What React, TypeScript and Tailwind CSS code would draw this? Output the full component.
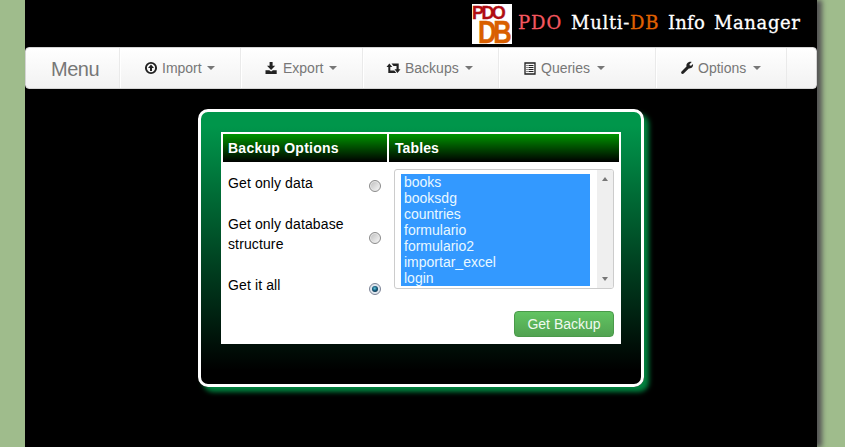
import React from "react";

const sans = "font-['Liberation_Sans',Arial,sans-serif]";

const UploadIcon = () => (
  <svg className="block h-[14px] w-[14px]" viewBox="0 0 14 14">
    <circle cx="7" cy="7" r="5.1" fill="none" stroke="#222" strokeWidth="1.9" />
    <path d="M7 3.4 10 7H8v3H6V7H4z" fill="#222" />
  </svg>
);
const DownloadIcon = () => (
  <svg className="block h-[14px] w-[14px]" viewBox="0 0 14 14">
    <path d="M5.600 1h3v3.800h2.600L7.100 9 3 4.800h2.600zM1.500 9.300h3.800l1.800 1.300 1.800-1.300h3.800V13H1.500z" fill="#222" />
  </svg>
);
const RetweetIcon = () => (
  <svg className="block h-[14px] w-[15px]" viewBox="0 0 15 14">
    <path d="M3.300 2.500 6.300 6h-2v3.500h4l2 2.500H2.300V6H.5zM5.500 2.500h7.200V8.300h1.800l-3 3.700L8.500 8.300h2V5H7.500z" fill="#222" />
  </svg>
);
const ListIcon = () => (
  <svg className="block h-[14px] w-[14px]" viewBox="0 0 14 14">
    <path d="M2 2h10v11H2z" fill="none" stroke="#222" strokeWidth="1.300" />
    <path d="M3.500 4.500h1m1 0h5m-7 2h1m1 0h5m-7 2h1m1 0h5m-7 2h1m1 0h5" stroke="#222" />
  </svg>
);
const WrenchIcon = () => (
  <svg className="block h-[14px] w-[14px]" viewBox="0 0 14 14">
    <path d="M11.700 1 9.500 3.200l.3 1.300 1.300.3L13 3c.5 2.800-1.600 4.800-4.200 4.400L3.700 12.600c-1.400 1.300-3.500-.7-2.200-2.200L6.500 5.400C6 2.700 8.500.2 11.700 1z" fill="#222" />
  </svg>
);

type Item = { label: string; icon: React.ReactNode; cls: string; text: string };
const items: Item[] = [
  { label: "Import", icon: <UploadIcon />, cls: "w-[121px] pl-[24px]", text: "ml-[4px] w-[45px]" },
  { label: "Export", icon: <DownloadIcon />, cls: "w-[122px] pl-[23px]", text: "ml-[5px] w-[46px]" },
  { label: "Backups", icon: <RetweetIcon />, cls: "w-[136px] pl-[23px]", text: "ml-[4px] w-[60px]" },
  { label: "Queries", icon: <ListIcon />, cls: "w-[157px] pl-[24px]", text: "ml-[4px] w-[56px]" },
  { label: "Options", icon: <WrenchIcon />, cls: "w-[131px] pl-[24px]", text: "ml-[4px] w-[55px]" },
];

const Radio = ({ on = false }: { on?: boolean }) => (
  <span
    className={`mr-[2px] flex h-3 w-3 items-center justify-center rounded-full border ${
      on ? "border-[#7d8496] bg-[#dfe6ee]" : "border-[#8b8b8b] bg-linear-to-br from-[#bcbcbc] to-[#fafafa] shadow-[inset_0_0_0_1px_#e9e9e9]"
    }`}
  >
    {on && <span className="h-[6px] w-[6px] rounded-full bg-[radial-gradient(circle_at_45%_40%,#62c8dc_0%,#155a7c_45%,#0a2238_90%)]" />}
  </span>
);

const tables = ["books", "booksdg", "countries", "formulario", "formulario2", "importar_excel", "login"];

export default function App() {
  return (
    <div className={`h-[447px] w-[845px] overflow-hidden bg-[#9fbc8c] pl-[25px] text-[14px] ${sans}`}>
      <div className="h-[447px] w-[792px] bg-black shadow-[5px_0_5px_#555]">
        <header className="flex h-[47px] pl-[447px] pt-[4px]">
          <svg className="block h-10 w-10 shrink-0 overflow-visible bg-white" viewBox="0 0 40 40" fontFamily="'Liberation Sans'" fontWeight="bold">
            <text x="0" y="15" fontSize="18" letterSpacing="-2.6" fill="#b00d12" stroke="#b00d12" strokeWidth=".3">PDO</text>
            <text x="7.500" y="39.500" fontSize="32" letterSpacing="-4" transform="scale(.8 1)" fill="#d95f00" stroke="#d95f00" strokeWidth=".4">DB</text>
          </svg>
          <h1 className="ml-[6px] mt-[6px] flex whitespace-nowrap font-['DejaVu_Serif',serif] text-[18px] leading-[26px] text-white [-webkit-text-stroke:0.3px]">
            <span className="w-[53px] tracking-[1px] text-[#f4575f]">PDO</span>
            <span className="w-[97px] tracking-[0.7px]">Multi-<span className="text-[#e26200]">DB</span></span>
            <span className="w-[46px] tracking-[0.2px]">Info</span>
            <span className="tracking-[0.6px]">Manager</span>
          </h1>
        </header>
        <nav className="flex h-[42px] rounded-[4px] border border-[#d4d4d4] bg-linear-to-b from-white to-[#f2f2f2] text-[#777]">
          <span className="w-[93px] pl-[25px] pt-[1px] text-[20px] leading-[40px] tracking-[-0.5px]">Menu</span>
          {items.map((it) => (
            <a key={it.label} className={`flex h-10 items-center border-l border-[#eaeaea] shadow-[inset_1px_0_0_white] ${it.cls}`}>
              {it.icon}
              <span className={it.text}>{it.label}</span>
              <span className="border-x-4 border-t-4 border-x-transparent border-t-[#777]" />
            </a>
          ))}
          <span className="h-10 border-l border-[#eaeaea]" />
        </nav>
        <main className="ml-[173px] mt-[20px] h-[278px] w-[446px] rounded-[10px] border-[3px] border-white bg-linear-to-b/srgb from-[#00964b] from-5% to-black to-95% pl-[20px] pt-[20px] shadow-[5px_5px_5px_#00833f]">
          <section className="h-[212px] w-[400px] bg-white p-[2px] text-black">
            <div className="flex h-7 gap-[2px] font-bold leading-[28px] text-white">
              <div className="w-[164px] bg-linear-to-b/srgb from-[#009400] to-black pl-[5px] tracking-[0.25px]">Backup Options</div>
              <div className="w-[230px] bg-linear-to-b/srgb from-[#009400] to-black pl-[6px] tracking-[0.1px]">Tables</div>
            </div>
            <div className="flex">
              <div className="w-[166px] pl-[5px] pt-[11px] leading-[20px] tracking-[0.12px]">
                <div className="flex h-[41px] justify-between">
                  <span>Get only data</span><span className="mr-[6px] mt-[7px]"><Radio /></span>
                </div>
                <div className="flex h-[61px] justify-between">
                  <span className="w-[125px]">Get only database structure</span><span className="mr-[6px] mt-[18px]"><Radio /></span>
                </div>
                <div className="flex justify-between">
                  <span>Get it all</span><span className="mr-[6px] mt-[8px]"><Radio on /></span>
                </div>
              </div>
              <div className="w-[230px] pl-[5px] pt-[7px]">
                <div className="flex h-[120px] w-[220px] justify-between overflow-hidden rounded-[3px] border border-[#ccc] pl-[6px]">
                  <div className="mt-[4px] h-[112px] w-[189px] overflow-hidden bg-[#3399ff] pl-[3px] leading-[16px] text-[#e8f8ff]">
                    {tables.map((t) => <div key={t}>{t}</div>)}
                  </div>
                  <div className="flex w-4 flex-col items-center justify-between bg-[#efefef] py-[7px]">
                    <span className="border-x-[3.500px] border-b-[4px] border-x-transparent border-b-[#777]" />
                    <span className="border-x-[3.500px] border-t-[4px] border-x-transparent border-t-[#777]" />
                  </div>
                </div>
                <button className="ml-[120px] mt-[22px] block h-[26px] w-[100px] rounded-[4px] border border-[#4a9a4a] bg-linear-to-b from-[#62c462] to-[#51a351] leading-[24px] text-[#effaef]">Get Backup</button>
              </div>
            </div>
          </section>
        </main>
      </div>
    </div>
  );
}
